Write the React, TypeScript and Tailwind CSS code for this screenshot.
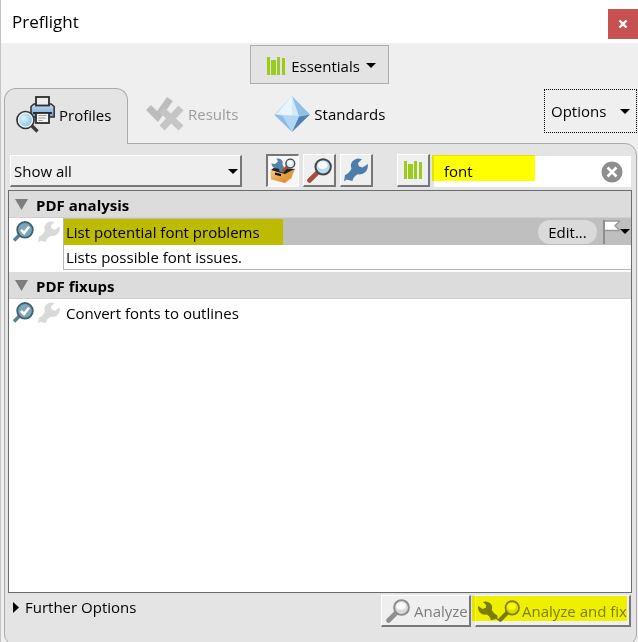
import { useState } from "react"

const WRENCH = "M14.5 0.5 C9 1 5.5 5.5 7.5 10.5 C6 13.5 4 16 1 17 L0 23.5 L2.5 21.5 L8.5 23 C9 20 11.5 17 14 16.3 C20 17 24.5 13 23.8 6 L18.5 9.5 L14.8 8.2 L14 5 L18 1.2 Z"

const sections = [
  {
    title: "PDF analysis",
    items: [{ name: "List potential font problems", description: "Lists possible font issues." }],
  },
  {
    title: "PDF fixups",
    items: [{ name: "Convert fonts to outlines", description: "" }],
  },
]

function BooksIcon() {
  return (
    <svg width="18" height="18" viewBox="0 0 18 18" fill="#9ccb1f" aria-hidden="true">
      <rect x="0" y="0" width="3" height="18" />
      <rect x="4" y="3" width="5" height="15" />
      <rect x="10" y="0" width="3" height="18" />
      <rect x="15" y="1" width="3" height="17" />
    </svg>
  )
}

function Caret() {
  return (
    <svg width="10" height="5" viewBox="0 0 10 5" aria-hidden="true">
      <path d="M0 0h10L5 5z" />
    </svg>
  )
}

function PrinterIcon() {
  return (
    <svg width="39" height="37" viewBox="0 0 39 37" aria-hidden="true">
      <defs>
        <linearGradient id="printer" x1="0" y1="0" x2="0" y2="1">
          <stop offset="0" stopColor="#c4dcf4" />
          <stop offset="1" stopColor="#6c9fd3" />
        </linearGradient>
        <radialGradient id="lensBlue" cx="0.4" cy="0.4">
          <stop offset="0" stopColor="#e2f5fc" />
          <stop offset="1" stopColor="#8fc6e4" />
        </radialGradient>
      </defs>
      <path d="M15 10.5l3-2.5h17l3.2 2.5v10.5H15z" fill="url(#printer)" stroke="#2d2d2d" strokeWidth="1.5" />
      <path d="M17 16h19v2H17z" fill="#2d2d2d" />
      <rect x="20" y="1" width="13" height="8.5" fill="#ececec" stroke="#2d2d2d" strokeWidth="1.8" />
      <rect x="20" y="17" width="13" height="10" fill="#f5f5f5" stroke="#2d2d2d" strokeWidth="1.8" />
      <path d="M22.5 19.5h8M22.5 22h7M22.5 24.5h4" stroke="#999" />
      <path d="M16 30l5.5 5.5" stroke="#3c3c3c" strokeWidth="3.4" />
      <circle cx="9.5" cy="24" r="8.5" fill="url(#lensBlue)" stroke="#333" strokeWidth="1.7" />
      <circle cx="9.5" cy="24" r="7" fill="none" stroke="#f1fafc" strokeWidth="1.2" />
    </svg>
  )
}

function ResultsIcon() {
  return (
    <svg width="38" height="35" viewBox="0 0 38 35" aria-hidden="true">
      <path d="M2.5 11.5l9 9L24 3" fill="none" stroke="#bcbcbc" strokeWidth="7" />
      <path d="M16 14l19 18M35 12L16 32" stroke="#c5c5c5" strokeWidth="7" />
    </svg>
  )
}

function StandardsIcon() {
  return (
    <svg width="36" height="36" viewBox="0 0 36 36" aria-hidden="true">
      <path d="M18 0L0 18.5l18 2z" fill="#c8e1f7" />
      <path d="M18 0L3 18l15 2.5z" fill="#e9f5fd" />
      <path d="M18 0l18 18.5-12 2z" fill="#91bfe8" />
      <path d="M18 0v20.5h7z" fill="#d4e8f9" />
      <path d="M0 18.5L18 36l-6-16z" fill="#8abbe9" />
      <path d="M8 19l17 1-7 16z" fill="#b2d6f5" />
      <path d="M36 18.5l-11 2L18 36z" fill="#4c81b4" />
    </svg>
  )
}

function WrenchIcon({ color, size, flip }: { color: string; size: number; flip?: boolean }) {
  return (
    <svg width={size} height={size} viewBox="0 0 24 24" className="shrink-0" aria-hidden="true">
      <path d={WRENCH} fill={color} transform={flip ? "matrix(-1 0 0 1 24 0)" : undefined} />
    </svg>
  )
}

function LensIcon({ rim, handle, glass, size }: { rim: string; handle: string; glass: string; size: number }) {
  return (
    <svg width={size} height={size} viewBox="0 0 24 24" className="shrink-0" aria-hidden="true">
      <path d="M9.5 14.5L2.5 21.5" stroke={handle} strokeWidth="4.6" strokeLinecap="round" />
      <circle cx="15.5" cy="8.5" r="7.4" fill={glass} stroke={rim} strokeWidth="1.9" />
      <ellipse cx="15" cy="7" rx="4.8" ry="3.8" fill="#fff" opacity="0.85" />
    </svg>
  )
}

function ToolboxIcon() {
  return (
    <svg width="26" height="26" viewBox="0 0 26 26" aria-hidden="true">
      <defs>
        <linearGradient id="box" x1="0" y1="0" x2="1" y2="1">
          <stop offset="0" stopColor="#f7c57c" />
          <stop offset="1" stopColor="#dd8a25" />
        </linearGradient>
      </defs>
      <path d="M1 12l4-3 20 2-2 3-7 3z" fill="#2d2019" />
      <path d="M0.5 12.5L15 16v9L1 21.5z" fill="url(#box)" />
      <path d="M15 16l9.5-5-3 9L15 25z" fill="#e09a40" />
      <path d="M5 14.5l6 1.5v2.2l-6-1.4z" fill="#111" />
      <path d="M1.5 5.5L5 6l3-2.5L6.5 0.5C11 0 13.5 2.5 12.5 6.5L15 11l-1 3.5-4-0.5-1.5-3.5C5 11 1.5 9 1.5 5.5z" fill="#5482ae" />
      <path d="M17.5 8.5L12.5 13" stroke="#b44c38" strokeWidth="3" />
      <circle cx="20.3" cy="5.5" r="4.4" fill="#d8edf7" stroke="#444" strokeWidth="1.4" />
      <circle cx="19.8" cy="4.8" r="2.2" fill="#fff" />
    </svg>
  )
}

function CheckLensIcon() {
  return (
    <svg width="21" height="21" viewBox="0 0 21 21" aria-hidden="true">
      <path d="M6.5 14L1 19.5" stroke="#587f94" strokeWidth="3.6" />
      <circle cx="12" cy="8.8" r="7.8" fill="#7fa5b8" stroke="#3f606f" strokeWidth="1.8" />
      <path d="M8 8.8l3 3.2 5-6.2" fill="none" stroke="#fff" strokeWidth="2.6" />
    </svg>
  )
}

function FlagIcon() {
  return (
    <svg width="17" height="24" viewBox="0 0 17 24" aria-hidden="true">
      <path d="M1 1h16l-5 4.8 5 4.7H1z" fill="#fff" />
      <path d="M1 1h16l-5 4.8 5 4.7H1" fill="none" stroke="#999" strokeWidth="1.5" />
      <path d="M1 0v24" stroke="#8e8e8e" strokeWidth="2" />
    </svg>
  )
}

const raised = "border-t border-l border-r-2 border-b-2 border-t-white border-l-white border-r-[#777] border-b-[#777] bg-[#efefef]"

export default function App() {
  const [query, setQuery] = useState("font")
  const [selected, setSelected] = useState("List potential font problems")
  const [tool, setTool] = useState("all")

  const tools = [
    { id: "all", label: "Show all tools", icon: <ToolboxIcon /> },
    {
      id: "checks",
      label: "Show checks",
      icon: <LensIcon rim="#454545" handle="#a84b40" glass="#b5dcf2" size={25} />,
    },
    { id: "fixups", label: "Show fixups", icon: <WrenchIcon color="#4d7dac" size={24} /> },
  ]

  return (
    <div className="flex h-screen flex-col overflow-hidden border-l border-[#c4c4c4] bg-[#efefef] font-['Open_Sans','Noto_Sans',sans-serif] text-[15px] leading-5 text-black">
      <header className="flex h-[43px] shrink-0 items-end justify-between bg-white">
        <h1 className="self-center pl-[11px] text-[17px]">Preflight</h1>
        <button aria-label="Close" className="mb-1 flex h-[30px] w-[30px] items-center justify-center bg-[#c75050]">
          <svg width="10" height="8" viewBox="0 0 10 8" aria-hidden="true">
            <path d="M1.5 0.5l7 7M8.5 0.5l-7 7" stroke="#fff" strokeWidth="2.4" />
          </svg>
        </button>
      </header>

      <div className="flex shrink-0 justify-center pt-0.5">
        <button className="flex h-[39px] w-[139px] items-center justify-center gap-1.5 border border-[#adadad] bg-[#e3e3e3] pt-0.5 pl-1">
          <BooksIcon />
          <span>Essentials</span>
          <Caret />
        </button>
      </div>

      <div className="mt-1 flex h-[55px] shrink-0 justify-between pl-[3px]">
        <div role="tablist" className="flex">
          <button
            role="tab"
            aria-selected="true"
            className="z-10 flex h-14 w-[124px] items-center gap-1 rounded-t-xl border border-b-0 border-[#a9a9a9] bg-[#e4e4e4] pb-1 pl-[11px]"
          >
            <PrinterIcon />
            <span>Profiles</span>
          </button>
          <button role="tab" aria-selected="false" className="ml-[18px] flex items-center gap-1 pb-1 text-[#9c9c9c]">
            <ResultsIcon />
            <span>Results</span>
          </button>
          <button role="tab" aria-selected="false" className="ml-9 flex items-center gap-1 pb-1">
            <StandardsIcon />
            <span>Standards</span>
          </button>
        </div>
        <button className="mt-px mr-px flex h-11 w-[93px] items-center justify-between border border-dotted border-black px-1.5">
          <span>Options</span>
          <Caret />
        </button>
      </div>

      <main className="mr-px -mb-1 ml-[3px] flex min-h-0 grow flex-col rounded-b-xl rounded-tr-xl border border-[#a9a9a9] bg-[#e4e4e4] pr-1 pl-[3px]">
        <div className="flex h-[46px] shrink-0 items-end pr-px pb-[3px] pl-0.5">
          <div className="relative h-8 w-[232px] shrink-0">
            <select aria-label="Filter" className={`h-full w-full appearance-none pl-[3px] outline-none ${raised}`}>
              <option>Show all</option>
            </select>
            <span className="pointer-events-none absolute top-3.5 right-1 leading-none">
              <Caret />
            </span>
          </div>
          <div className="ml-6 flex shrink-0 gap-1">
            {tools.map((t) => (
              <button
                key={t.id}
                aria-label={t.label}
                aria-pressed={tool === t.id}
                onClick={() => setTool(t.id)}
                className={`flex h-[33px] w-[33px] items-center justify-center ${
                  tool === t.id
                    ? "border-t-2 border-r border-b border-l-2 border-t-[#777] border-r-white border-b-white border-l-[#777] bg-[#f6f6f6]"
                    : raised
                }`}
              >
                {t.icon}
              </button>
            ))}
          </div>
          <button aria-label="Libraries" className={`ml-6 flex h-[33px] w-[33px] shrink-0 items-center justify-center ${raised}`}>
            <BooksIcon />
          </button>
          <div className="relative ml-1 flex h-[31px] min-w-0 grow items-center bg-white">
            <input
              aria-label="Search profiles"
              value={query}
              onChange={(e) => setQuery(e.target.value)}
              className="h-full w-0 grow bg-transparent pb-0.5 pl-2.5 outline-none"
            />
            <span className="pointer-events-none absolute -top-px -left-0.5 h-[26px] w-[103px] bg-[#ffff00] mix-blend-multiply" />
            <button aria-label="Clear search" onClick={() => setQuery("")} className="mr-2 shrink-0">
              <svg width="22" height="22" viewBox="0 0 22 22" aria-hidden="true">
                <circle cx="11" cy="11" r="10.5" fill="#8e8e8e" />
                <path d="M6.5 6.5l9 9M15.5 6.5l-9 9" stroke="#fff" strokeWidth="2.6" />
              </svg>
            </button>
          </div>
        </div>

        <div className="flex min-h-0 grow flex-col border border-[#6b6b6b] bg-white">
          {sections.map((section) => (
            <section key={section.title} className="pb-0.5">
              <h2 className="flex h-[27px] items-center gap-2 border-b border-[#cfcfcf] bg-[#dcdcdc] pt-0.5 pl-1.5 font-bold">
                <svg width="13" height="11" viewBox="0 0 13 11" aria-hidden="true" className="mb-0.5">
                  <path d="M0 0h13L6.5 11z" fill="#7d7d7d" />
                </svg>
                {section.title}
              </h2>
              {section.items.map((item) => (
                <div key={item.name} className="flex">
                  <div className="flex h-[27px] w-[54px] shrink-0 items-center gap-1 pl-1">
                    <CheckLensIcon />
                    <WrenchIcon color="#d9d9d9" size={22} />
                  </div>
                  {selected === item.name ? (
                    <div className="grow border-b border-l border-[#b9b9b9]">
                      <div className="flex h-[27px] items-center bg-[#bfbfbf] pr-px">
                        <mark className="flex h-[26px] w-[219px] items-center bg-[#bcbb00] pl-0.5">{item.name}</mark>
                        <button className="ml-auto h-6 w-[59px] rounded-full bg-[#dadada]">Edit...</button>
                        <button aria-label="Flag" className="ml-1.5 flex items-center">
                          <FlagIcon />
                          <Caret />
                        </button>
                      </div>
                      <p className="flex h-6 items-center pl-0.5">{item.description}</p>
                    </div>
                  ) : (
                    <button onClick={() => setSelected(item.name)} className="h-[27px] grow pl-[3px] text-left">
                      {item.name}
                    </button>
                  )}
                </div>
              ))}
            </section>
          ))}
        </div>

        <footer className="flex h-[52px] shrink-0 items-start justify-between pt-0.5 pr-px pl-[5px]">
          <button className="mt-0.5 flex items-center gap-1.5">
            <svg width="6" height="11" viewBox="0 0 6 11" aria-hidden="true">
              <path d="M0 0l6 5.5L0 11z" />
            </svg>
            <span>Further Options</span>
          </button>
          <div className="flex gap-1 text-[#7c7c7c]">
            <button className={`flex h-8 w-[90px] items-center gap-1 pl-1 ${raised}`}>
              <LensIcon rim="#8c8c8c" handle="#8f8f8f" glass="#dadada" size={24} />
              <span>Analyze</span>
            </button>
            <button className={`relative flex h-8 w-[156px] items-center pl-0.5 whitespace-nowrap ${raised}`}>
              <WrenchIcon color="#7c7c7c" size={20} flip />
              <LensIcon rim="#7c7c7c" handle="#7c7c7c" glass="#dadada" size={22} />
              <span className="pl-0.5">Analyze and fix</span>
              <span className="pointer-events-none absolute top-0 -left-1 h-[25px] w-[155px] bg-[#ffff00] mix-blend-multiply" />
            </button>
          </div>
        </footer>
      </main>
    </div>
  )
}
